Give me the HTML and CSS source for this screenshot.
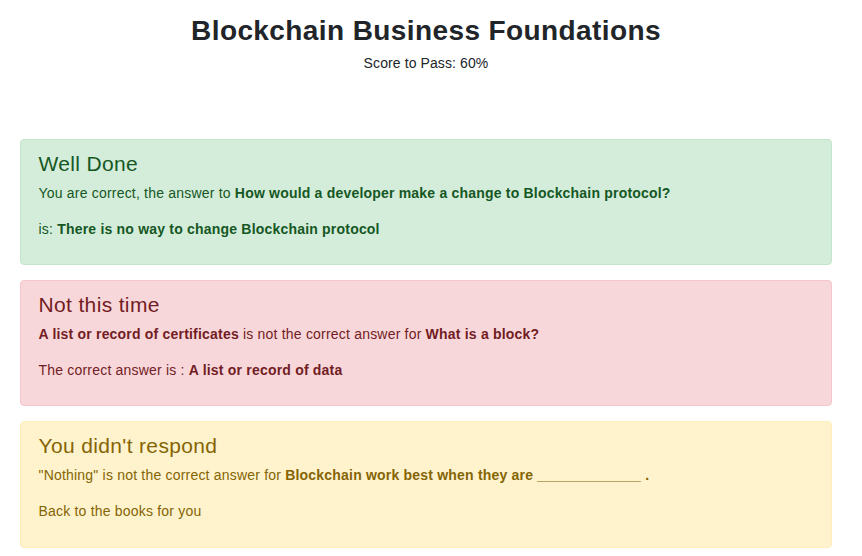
FILE: index.html
```html
<!DOCTYPE html>
<html lang="en">
<head>
<meta charset="utf-8">
<title>Blockchain Business Foundations</title>
<link rel="stylesheet" href="styles.css">
</head>
<body>
<div class="page">
  <header class="header">
    <h1 class="title">Blockchain Business Foundations</h1>
    <p class="score">Score to Pass: 60%</p>
  </header>
  <main class="results">
    <section class="alert alert-success">
      <h4 class="alert-heading">Well Done</h4>
      <p>You are correct, the answer to <b>How would a developer make a change to Blockchain protocol?</b></p>
      <p>is: <b>There is no way to change Blockchain protocol</b></p>
    </section>
    <section class="alert alert-danger">
      <h4 class="alert-heading">Not this time</h4>
      <p><b>A list or record of certificates</b> is not the correct answer for <b>What is a block?</b></p>
      <p>The correct answer is : <b>A list or record of data</b></p>
    </section>
    <section class="alert alert-warning">
      <h4 class="alert-heading">You didn't respond</h4>
      <p>"Nothing" is not the correct answer for <b>Blockchain work best when they are _____________ .</b></p>
      <p>Back to the books for you</p>
    </section>
  </main>
</div>
</body>
</html>
```
FILE: styles.css
```css
html, body {
  margin: 0;
  padding: 0;
  background: #fff;
}
body {
  font-family: "Liberation Sans", Arial, sans-serif;
  font-size: 14px;
  line-height: 1.5;
  color: #212529;
}
.page {
  padding: 0 20px;
  margin-right: 10px;
}
.header {
  text-align: center;
  padding-top: 13px;
}
.title {
  font-size: 28px;
  line-height: 36px;
  font-weight: 700;
  letter-spacing: 0.4px;
  margin: 0 0 4px;
}
.score {
  margin: 0;
  letter-spacing: 0.1px;
}
.results {
  display: flex;
  flex-direction: column;
  gap: 15px;
  margin-top: 65px;
}
.alert {
  border: 1px solid transparent;
  border-radius: 4px;
  padding: 10.5px 17.5px 9.5px;
  letter-spacing: 0.2px;
}
.alert-heading {
  font-size: 21px;
  line-height: 1.2;
  font-weight: 400;
  letter-spacing: 0.35px;
  margin: 0 0 7px;
}
.alert p {
  margin: 0 0 15px;
}
.alert b {
  font-weight: 700;
}
.alert-success {
  background: #d4edda;
  border-color: #c3e6cb;
  color: #155724;
}
.alert-danger {
  background: #f8d7da;
  border-color: #f5c6cb;
  color: #721c24;
}
.alert-warning {
  background: #fff3cd;
  border-color: #ffeeba;
  color: #856404;
}
```
